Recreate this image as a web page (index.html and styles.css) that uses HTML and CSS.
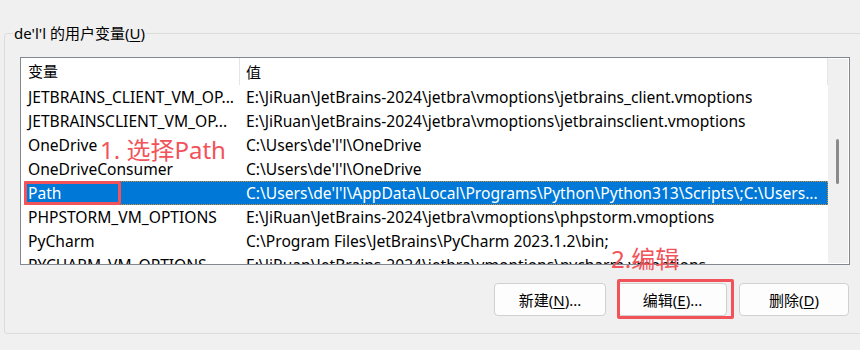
FILE: index.html
```html
<!DOCTYPE html>
<html lang="zh-CN">
<head>
  <meta charset="UTF-8">
  <title>环境变量</title>
  <link rel="stylesheet" href="styles.css">
</head>
<body>

  <div class="group">
    <div class="group-title">de'l'l 的用户变量(<u>U</u>)</div>

    <div class="list">
      <div class="list-body">
        <div class="list-head">
          <div class="col-name">变量</div>
          <div class="col-value head-value">值</div>
        </div>

        <div class="row">
          <div class="col-name">JETBRAINS_CLIENT_VM_OP...</div>
          <div class="col-value">E:\JiRuan\JetBrains-2024\jetbra\vmoptions\jetbrains_client.vmoptions</div>
        </div>
        <div class="row">
          <div class="col-name">JETBRAINSCLIENT_VM_OP...</div>
          <div class="col-value">E:\JiRuan\JetBrains-2024\jetbra\vmoptions\jetbrainsclient.vmoptions</div>
        </div>
        <div class="row">
          <div class="col-name">OneDrive</div>
          <div class="col-value">C:\Users\de'l'l\OneDrive</div>
        </div>
        <div class="row">
          <div class="col-name">OneDriveConsumer</div>
          <div class="col-value">C:\Users\de'l'l\OneDrive</div>
        </div>
        <div class="row selected">
          <div class="col-name">Path</div>
          <div class="col-value">C:\Users\de'l'l\AppData\Local\Programs\Python\Python313\Scripts\;C:\Users...</div>
          <span class="mark mark-path"></span>
        </div>
        <div class="row">
          <div class="col-name">PHPSTORM_VM_OPTIONS</div>
          <div class="col-value">E:\JiRuan\JetBrains-2024\jetbra\vmoptions\phpstorm.vmoptions</div>
        </div>
        <div class="row">
          <div class="col-name">PyCharm</div>
          <div class="col-value">C:\Program Files\JetBrains\PyCharm 2023.1.2\bin;</div>
        </div>
        <div class="row">
          <div class="col-name">PYCHARM_VM_OPTIONS</div>
          <div class="col-value">E:\JiRuan\JetBrains-2024\jetbra\vmoptions\pycharm.vmoptions</div>
        </div>

        <div class="note note-1">1. 选择Path</div>
      </div>

      <div class="scrollbar">
        <div class="thumb"></div>
      </div>
    </div>

    <div class="buttons">
      <button class="btn">新建(<u>N</u>)...</button>
      <div class="btn-wrap">
        <button class="btn">编辑(<u>E</u>)...</button>
        <span class="mark mark-edit"></span>
        <div class="note note-2">2.编辑</div>
      </div>
      <button class="btn btn-delete">删除(<u>D</u>)</button>
    </div>
  </div>

</body>
</html>
```

FILE: styles.css
```css
body {
  margin: 0;
  background: #f0f0f0;
  font-family: 'Noto Sans', 'Noto Sans CJK SC', sans-serif;
  font-size: 15px;
  color: #000;
  overflow: hidden;
}

.group {
  position: relative;
  margin: 33px 0 0 4px;
  width: 880px;
  height: 301px;
  border: 1px solid #dcdcdc;
  border-radius: 3px;
  padding: 23px 0 0 15px;
  box-sizing: border-box;
}

.group-title {
  position: absolute;
  top: -12px;
  left: 8px;
  padding: 0 1px;
  background: #f0f0f0;
  line-height: 22px;
}

u {
  text-decoration-thickness: 1px;
  text-underline-offset: 2px;
}

.list {
  display: flex;
  width: 830px;
  height: 208px;
  border: 1px solid #828790;
  background: #fff;
  box-sizing: border-box;
  overflow: hidden;
  font-size: 15.6px;
}

.list-body {
  position: relative;
  flex: 1;
  overflow: hidden;
}

.list-head {
  display: flex;
  height: 27px;
  align-items: center;
  border-right: 1px solid #e5e5e5;
  font-size: 15px;
}

.list-head .col-name {
  padding-left: 7px;
  height: 27px;
  line-height: 27px;
  border-right: 1px solid #e5e5e5;
  box-sizing: border-box;
}

.head-value {
  padding-left: 5px;
}

.row {
  position: relative;
  display: flex;
  height: 24px;
  line-height: 24px;
  margin-left: 3px;
  white-space: nowrap;
  box-sizing: border-box;
}

.col-name {
  width: 219px;
  flex: none;
  padding-left: 4px;
  box-sizing: border-box;
  overflow: hidden;
  white-space: nowrap;
}

.row .col-name {
  width: 216px;
}

.col-value {
  padding-left: 6px;
  overflow: hidden;
  white-space: nowrap;
}

.row.selected {
  background: #0078d7;
  color: #fff;
  outline: 1px dotted #e0902e;
  outline-offset: -1px;
}

.scrollbar {
  position: relative;
  width: 20px;
  margin: 1px 1px 1px 0;
  background: #f0f0f0;
  flex: none;
}

.thumb {
  position: absolute;
  left: 8px;
  top: 80px;
  width: 3px;
  height: 45px;
  border-radius: 2px;
  background: #8a8a8a;
}

.mark {
  position: absolute;
  border: 3px solid #f2535b;
  border-radius: 2px;
  box-sizing: border-box;
}

.mark-path {
  left: 0;
  top: 0;
  width: 97px;
  height: 24px;
}

.note {
  position: absolute;
  color: #f2535b;
  font-size: 24px;
  line-height: 28px;
  white-space: nowrap;
}

.note-1 {
  left: 79px;
  top: 78px;
}

.buttons {
  display: flex;
  justify-content: flex-end;
  gap: 12px;
  width: 829px;
  margin-top: 18px;
}

.btn {
  width: 112px;
  height: 33px;
  padding: 0;
  font: inherit;
  color: #000;
  background: #fdfdfd;
  border: 1px solid #d0d0d0;
  border-radius: 4px;
}

.btn-delete {
  width: 110px;
}

.btn-wrap {
  position: relative;
  display: flex;
}

.btn-wrap .btn {
  width: 109px;
}

.mark-edit {
  left: -1px;
  top: -4px;
  width: 117px;
  height: 40px;
}

.note-2 {
  left: -7px;
  top: -38px;
}
```
